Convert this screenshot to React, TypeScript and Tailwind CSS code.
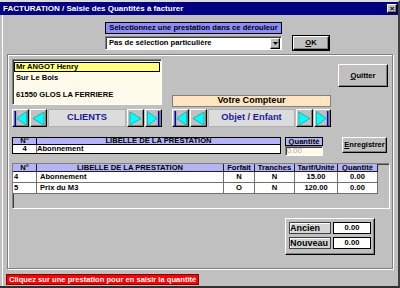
import React from 'react';

const raised = 'border border-t-white border-l-white border-r-black border-b-black shadow-[inset_-1px_-1px_0_#808080]';
const sunken = 'border border-t-[#808080] border-l-[#808080] border-r-white border-b-white shadow-[inset_1px_1px_0_#404040]';

type Dir = 'first' | 'prev' | 'next' | 'last';

const NavArrow = ({ dir }: { dir: Dir }) => (
  <button className={`w-[17px] h-[18px] bg-[#c0c0c0] flex items-center justify-center p-0 ${raised}`}>
    <svg width="13" height="15" viewBox="0 0 13 15">
      {dir === 'first' && (
        <>
          <rect x="0.5" y="0" width="1.6" height="15" fill="#0000b8" />
          <polygon points="12.5,0.5 3,7.5 12.5,14.5" fill="#00ffff" stroke="#009090" strokeWidth="0.6" />
        </>
      )}
      {dir === 'prev' && <polygon points="12,1 1,7.5 12,14" fill="#00ffff" stroke="#009090" strokeWidth="0.6" />}
      {dir === 'next' && <polygon points="1,1 12,7.5 1,14" fill="#00ffff" stroke="#009090" strokeWidth="0.6" />}
      {dir === 'last' && (
        <>
          <polygon points="0.5,0.5 10,7.5 0.5,14.5" fill="#00ffff" stroke="#009090" strokeWidth="0.6" />
          <rect x="10.9" y="0" width="1.6" height="15" fill="#0000b8" />
        </>
      )}
    </svg>
  </button>
);

const Nav = ({ label }: { label: string }) => (
  <div className="flex gap-[1px] h-[18px]">
    <NavArrow dir="first" />
    <NavArrow dir="prev" />
    <div className="flex-1 flex items-center justify-center bg-[#dcdcdc] border border-[#b0b0b0] text-[#1a1a9a] text-[9.3px] font-bold leading-none">
      {label}
    </div>
    <NavArrow dir="next" />
    <NavArrow dir="last" />
  </div>
);

const Button = ({ first, rest, className }: { first: string; rest: string; className: string }) => (
  <button className={`bg-[#c0c0c0] flex items-center justify-center text-[7.6px] font-bold leading-none ${raised} ${className}`}>
    <span><span className="underline">{first}</span>{rest}</span>
  </button>
);

const rows = [
  { n: '4', lib: 'Abonnement', forfait: 'N', tranches: 'N', tarif: '15.00', qte: '0.00' },
  { n: '5', lib: 'Prix du M3', forfait: 'O', tranches: 'N', tarif: '120.00', qte: '0.00' },
];

const head = 'bg-[#b4b4f6] border-r border-b border-[#202020] flex items-center justify-center';
const cell = 'bg-white border-r border-b border-[#707070] flex items-center';

export default function App() {
  return (
    <div className="w-[400px] h-[288px] bg-[#c0c0c0] overflow-hidden flex flex-col border-t-2 border-t-[#dcdcdc] border-r-2 border-r-[#404040] border-b-2 border-b-[#303030] text-black text-[7.6px] font-bold leading-none [font-family:'Liberation_Sans',Arial,sans-serif]">
      {/* barre de titre */}
      <div className="h-[13px] shrink-0 bg-[#000080] flex items-center justify-between pl-[3px] pr-[1px]">
        <span className="text-white text-[8px]">FACTURATION / Saisie des Quantités à facturer</span>
        <div className={`w-[10px] h-[9px] bg-[#c0c0c0] flex items-center justify-center text-[8px] ${raised}`}>×</div>
      </div>

      <div className="flex-1 flex flex-col ml-[2px] border-l border-l-white">
        {/* choix de la prestation */}
        <div className="flex items-end mt-[7px] ml-[102px]">
          <div className="w-[177px] flex flex-col">
            <div className="h-[12px] bg-[#8c8cff] border border-black flex items-center justify-center">
              Selectionnez une prestation dans ce dérouleur
            </div>
            <div className={`h-[14px] mt-[2px] bg-white flex items-center ${sunken}`}>
              <span className="flex-1 pl-[3px]">Pas de sélection particulière</span>
              <div className={`w-[10px] h-[11px] mr-[1px] bg-[#c0c0c0] flex items-center justify-center ${raised}`}>
                <svg width="5" height="3" viewBox="0 0 5 3"><polygon points="0,0 5,0 2.5,3" fill="#000" /></svg>
              </div>
            </div>
          </div>
          <Button first="O" rest="K" className="ml-[11px] w-[36px] h-[14px] outline outline-1 outline-black" />
        </div>

        {/* cadre principal */}
        <div className="ml-[4px] mt-[4px] w-[386px] h-[215px] shrink-0 border border-[#808080] shadow-[inset_1px_1px_0_#fff,1px_1px_0_#fff] px-[4px] pt-[4px] flex flex-col">
          <div className="flex items-start">
            <div className="w-[150px] flex flex-col">
              <div className={`h-[46px] bg-[#fffbea] flex flex-col pt-[2px] px-[1px] ${sunken}`}>
                <div className="h-[10px] bg-[#ffff80] border border-black flex items-center pl-[1px]">Mr ANGOT Henry</div>
                <div className="h-[10px] mt-[1px] flex items-center pl-[2px]">Sur Le Bois</div>
                <div className="h-[10px] mt-[7px] flex items-center pl-[2px]">61550 GLOS LA FERRIERE</div>
              </div>
              <div className="mt-[4px]">
                <Nav label="CLIENTS" />
              </div>
            </div>

            <div className="ml-[10px] w-[159px] h-[68px] flex flex-col justify-end">
              <div className="h-[12px] mb-[2px] bg-[#ffe6c0] border border-[#808080] flex items-center justify-center text-[9.1px]">
                Votre Compteur
              </div>
              <Nav label="Objet / Enfant" />
            </div>

            <Button first="Q" rest="uitter" className="ml-[7px] mt-[5px] w-[50px] h-[23px]" />
          </div>

          {/* saisie */}
          <div className="flex items-start mt-[10px]">
            <div className="w-[269px] border border-black flex flex-col">
              <div className="h-[7px] flex bg-[#b4b4f6] border-b border-black">
                <div className="w-[24px] border-r border-black flex items-center justify-center">N°</div>
                <div className="flex-1 flex items-center justify-center">LIBELLE DE LA PRESTATION</div>
              </div>
              <div className="h-[8px] flex bg-white">
                <div className="w-[24px] border-r border-[#707070] flex items-center justify-center">4</div>
                <div className="flex-1 flex items-center">Abonnement</div>
              </div>
            </div>
            <div className="ml-[4px] w-[38px] flex flex-col">
              <div className="h-[9px] bg-[#b4b4f6] border border-black flex items-center justify-center">Quantité</div>
              <div className={`h-[10px] bg-[#fffbe6] text-[#a8a8a8] font-normal flex items-center pl-[1px] ${sunken}`}>0.00</div>
            </div>
            <Button first="E" rest="nregistrer" className="ml-[19px] w-[45px] h-[16px]" />
          </div>

          {/* liste des prestations */}
          <div className={`mt-[7px] w-[378px] h-[46px] bg-[#c0c0c0] ${sunken}`}>
            <div className="grid grid-cols-[24px_187px_31px_40px_43px_40px] grid-rows-[8px_11px_11px]">
              <div className={head}>N°</div>
              <div className={head}>LIBELLE DE LA PRESTATION</div>
              <div className={head}>Forfait</div>
              <div className={head}>Tranches</div>
              <div className={head}>Tarif/Unité</div>
              <div className={head}>Quantité</div>
              {rows.map((r) => (
                <React.Fragment key={r.n}>
                  <div className={`${cell} pl-[1px]`}>{r.n}</div>
                  <div className={`${cell} pl-[3px]`}>{r.lib}</div>
                  <div className={`${cell} justify-center`}>{r.forfait}</div>
                  <div className={`${cell} justify-center`}>{r.tranches}</div>
                  <div className={`${cell} justify-center`}>{r.tarif}</div>
                  <div className={`${cell} justify-center`}>{r.qte}</div>
                </React.Fragment>
              ))}
            </div>
          </div>

          {/* compteur */}
          <div className={`ml-[273px] mt-[9px] w-[90px] h-[37px] flex flex-col gap-[3px] p-[3px] ${raised}`}>
            {[['Ancien', '0.00'], ['Nouveau', '0.00']].map(([l, v]) => (
              <div key={l} className="flex gap-[2px] h-[12px]">
                <div className="w-[42px] bg-[#d4d4d4] border border-[#404040] shadow-[inset_1px_1px_0_#fff] flex items-center text-[9px] whitespace-nowrap overflow-hidden">{l}</div>
                <div className="w-[38px] bg-white border border-black flex items-center justify-center">{v}</div>
              </div>
            ))}
          </div>
        </div>

        {/* barre d'état */}
        <div className="self-start ml-[3px] mt-[5px] h-[11px] px-[2px] bg-[#ff0000] border border-[#800000] text-white flex items-center">
          Cliquez sur une prestation pour en saisir la quantité
        </div>
      </div>
    </div>
  );
}
